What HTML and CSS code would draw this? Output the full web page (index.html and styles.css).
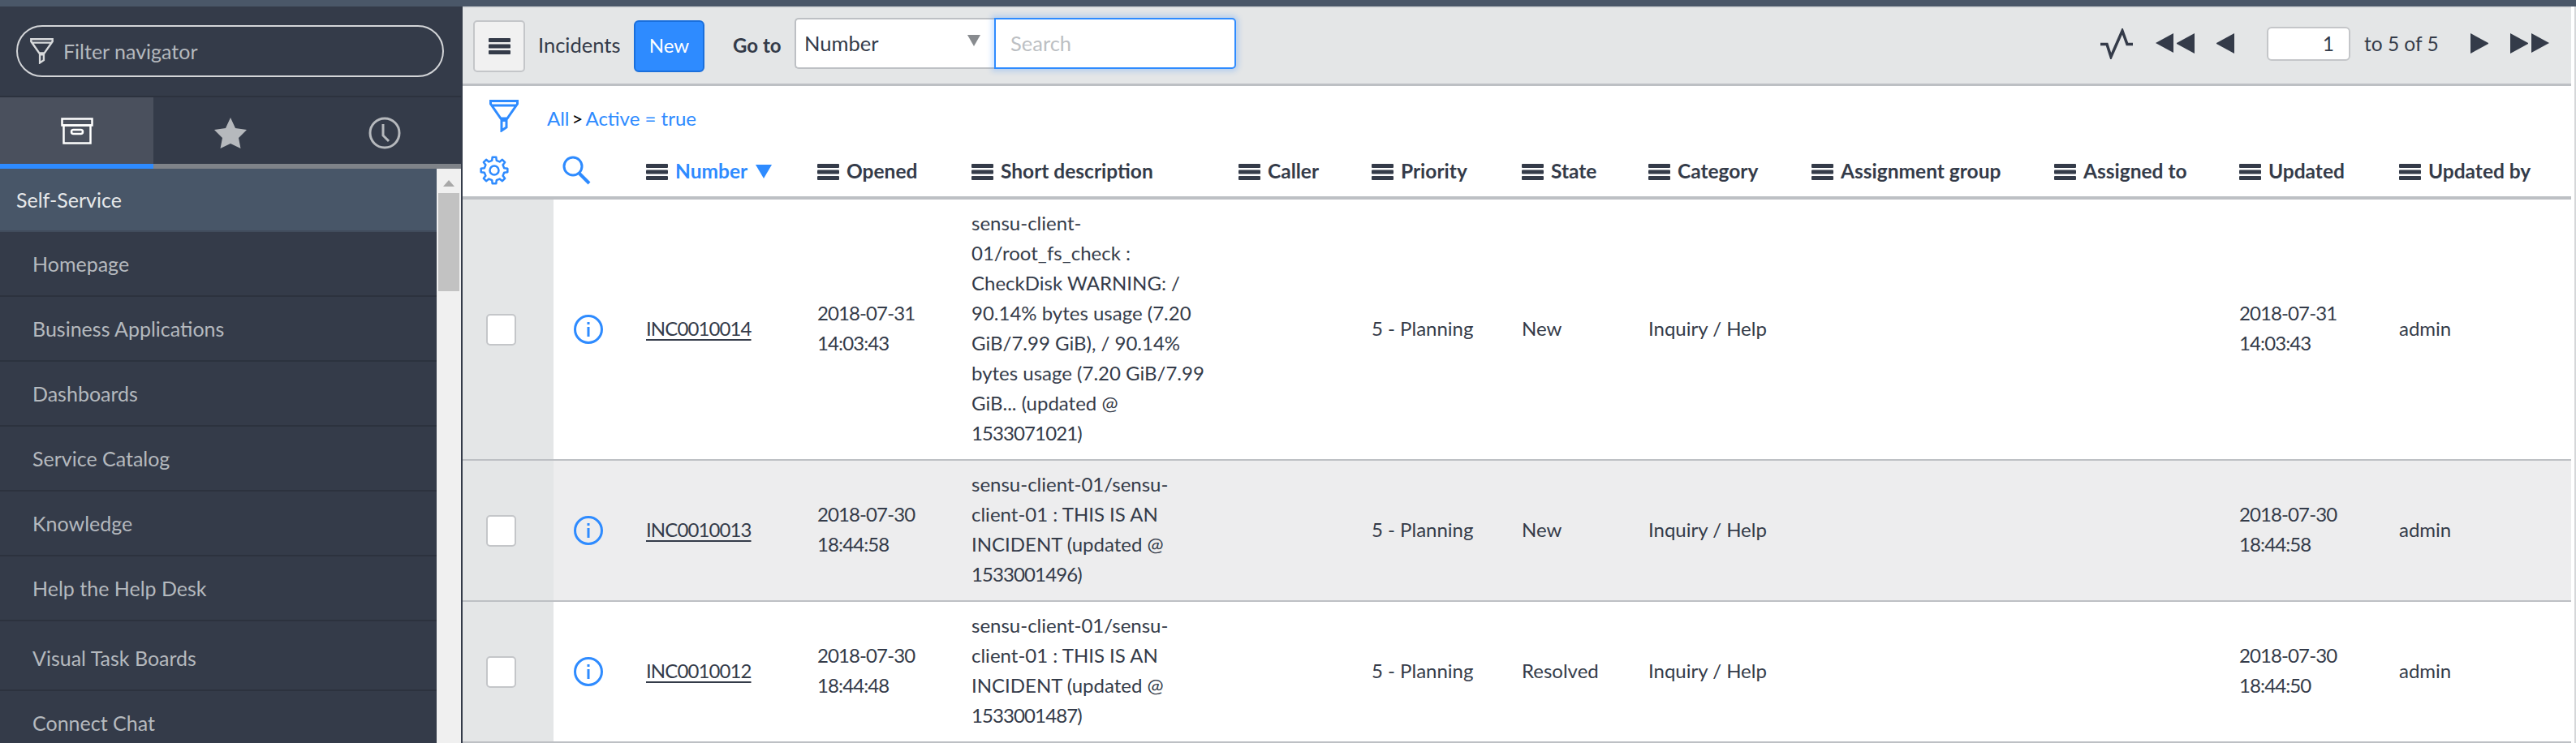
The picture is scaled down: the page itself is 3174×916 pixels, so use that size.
FILE: index.html
```html
<!DOCTYPE html>
<html lang="en">
<head>
    <meta charset="UTF-8">
    <title>Incidents</title>
    <link rel="stylesheet" href="styles.css">
</head>
<body>

<svg class="defs" width="0" height="0">
    <symbol id="bars" viewBox="0 0 27 20">
        <rect width="27" height="5" rx="1"/>
        <rect y="7.5" width="27" height="5" rx="1"/>
        <rect y="15" width="27" height="5" rx="1"/>
    </symbol>
    <symbol id="funnel" viewBox="0 0 36 40">
        <path d="M1.500 1.500H34.500V5L22 23H14L1.500 5zM2 7H34M15 25.500V38L21 34V25.500z" fill="none" stroke="currentColor" stroke-width="3"/>
    </symbol>
    <symbol id="info" viewBox="0 0 36 36">
        <circle cx="18" cy="18" r="16.500" fill="none" stroke="#2e8bff" stroke-width="3"/>
        <rect x="16.500" y="15" width="3" height="12" fill="#2e8bff"/>
        <rect x="16.500" y="9" width="3" height="3" fill="#2e8bff"/>
    </symbol>
</svg>

<div class="topbar"></div>

<div class="layout">
    <aside class="sidebar">
        <div class="nav-filter">
            <div class="nav-filter-box">
                <svg class="nav-funnel"><use href="#funnel"/></svg>
                <span>Filter navigator</span>
            </div>
        </div>
        <div class="tabs">
            <div class="tab active">
                <svg width="40" height="33" viewBox="0 0 40 33" fill="none" stroke="#fff" stroke-width="2.500">
                    <rect x="1.500" y="1.500" width="37" height="8"/>
                    <rect x="3.500" y="9.500" width="33" height="22"/>
                    <rect x="13" y="15" width="14" height="5" rx="2.500"/>
                </svg>
            </div>
            <div class="tab">
                <svg width="40" height="38" viewBox="0 0 40 38"><path d="M20 0l6 13 14 2-10 10 2.500 13L20 32 7.500 38 10 25 0 15l14-2z" fill="#b6b9bd"/></svg>
            </div>
            <div class="tab">
                <svg width="40" height="40" viewBox="0 0 40 40" fill="none" stroke="#b6b9bd" stroke-width="3">
                    <ellipse cx="20" cy="20" rx="18" ry="18"/>
                    <path d="M18 9v14l7 7"/>
                </svg>
            </div>
        </div>
        <div class="nav-body">
            <ul class="nav-list">
                <li class="nav-head">Self-Service</li>
                <li>Homepage</li>
                <li>Business Applications</li>
                <li>Dashboards</li>
                <li>Service Catalog</li>
                <li>Knowledge</li>
                <li>Help the Help Desk</li>
                <li class="tall">Visual Task Boards</li>
                <li>Connect Chat</li>
            </ul>
            <div class="scrollbar">
                <div class="scroll-arrow"></div>
                <div class="scroll-thumb"></div>
            </div>
        </div>
    </aside>

    <main class="content">
        <div class="toolbar">
            <button class="menu-btn"><svg class="bars"><use href="#bars"/></svg></button>
            <span class="list-title">Incidents</span>
            <button class="new-btn">New</button>
            <span class="goto">Go to</span>
            <div class="goto-select">Number<span class="caret"></span></div>
            <input class="goto-search" type="text" placeholder="Search">
            <div class="pager">
                <svg class="pulse" width="42" height="38" viewBox="0 0 42 38" fill="none" stroke="#343b49" stroke-width="3.500">
                    <path d="M1 19.500H9L14 35 28 3 34 19.500H41"/>
                </svg>
                <span class="tri left double first"></span>
                <span class="tri left"></span>
                <input class="page-input" type="text" value="1">
                <span class="page-count">to 5 of 5</span>
                <span class="tri right"></span>
                <span class="tri right double"></span>
            </div>
        </div>

        <div class="breadcrumb">
            <svg class="crumb-funnel"><use href="#funnel"/></svg>
            <span class="crumbs"><a>All</a><b>&gt;</b><a>Active = true</a></span>
        </div>

        <table class="incidents">
            <colgroup>
                <col class="c-check"><col class="c-info"><col class="c-number"><col class="c-opened">
                <col class="c-desc"><col class="c-caller"><col class="c-priority"><col class="c-state">
                <col class="c-category"><col class="c-group"><col class="c-assigned"><col class="c-updated"><col class="c-by">
            </colgroup>
            <thead>
                <tr>
                    <th class="cell-gear">
                        <svg width="36" height="36" viewBox="0 0 36 36" fill="none" stroke="#2e8bff" stroke-width="2.500" stroke-linejoin="round">
                            <circle cx="18" cy="18" r="5.500"/>
                            <polygon points="30.18,15.19 34.34,15.7 34.34,20.3 30.18,20.81 28.6,24.62 31.18,27.93 27.93,31.18 24.62,28.6 20.81,30.18 20.3,34.34 15.7,34.34 15.19,30.18 11.38,28.6 8.07,31.18 4.82,27.93 7.4,24.62 5.82,20.81 1.66,20.3 1.66,15.7 5.82,15.19 7.4,11.38 4.82,8.07 8.07,4.82 11.38,7.4 15.19,5.82 15.7,1.66 20.3,1.66 20.81,5.82 24.62,7.4 27.93,4.82 31.18,8.07 28.6,11.38"/>
                        </svg>
                    </th>
                    <th class="cell-info">
                        <svg width="36" height="36" viewBox="0 0 36 36" fill="none" stroke="#2e8bff" stroke-width="3">
                            <circle cx="13" cy="13" r="11"/>
                            <path d="M21 22L33 34" stroke-width="4"/>
                        </svg>
                    </th>
                    <th class="sorted"><svg class="bars"><use href="#bars"/></svg>Number <span class="sort-arrow"></span></th>
                    <th><svg class="bars"><use href="#bars"/></svg>Opened</th>
                    <th><svg class="bars"><use href="#bars"/></svg>Short description</th>
                    <th><svg class="bars"><use href="#bars"/></svg>Caller</th>
                    <th><svg class="bars"><use href="#bars"/></svg>Priority</th>
                    <th><svg class="bars"><use href="#bars"/></svg>State</th>
                    <th><svg class="bars"><use href="#bars"/></svg>Category</th>
                    <th><svg class="bars"><use href="#bars"/></svg>Assignment group</th>
                    <th><svg class="bars"><use href="#bars"/></svg>Assigned to</th>
                    <th><svg class="bars"><use href="#bars"/></svg>Updated</th>
                    <th><svg class="bars"><use href="#bars"/></svg>Updated by</th>
                </tr>
            </thead>
            <tbody>
                <tr>
                    <td class="cell-check"><span class="checkbox"></span></td>
                    <td class="cell-info"><svg class="info"><use href="#info"/></svg></td>
                    <td class="num"><a class="inc">INC0010014</a></td>
                    <td class="num">2018-07-31<br>14:03:43</td>
                    <td>sensu-client-<br>01/root_fs_check :<br>CheckDisk WARNING: /<br>90.14% bytes usage (7.20<br>GiB/7.99 GiB), / 90.14%<br>bytes usage (7.20 GiB/7.99<br>GiB... (updated @<br><span class="num">1533071021)</span></td>
                    <td></td>
                    <td>5 - Planning</td>
                    <td>New</td>
                    <td>Inquiry / Help</td>
                    <td></td>
                    <td></td>
                    <td class="num">2018-07-31<br>14:03:43</td>
                    <td>admin</td>
                </tr>
                <tr class="odd">
                    <td class="cell-check"><span class="checkbox"></span></td>
                    <td class="cell-info"><svg class="info"><use href="#info"/></svg></td>
                    <td class="num"><a class="inc">INC0010013</a></td>
                    <td class="num">2018-07-30<br>18:44:58</td>
                    <td>sensu-client-01/sensu-<br>client-01 : THIS IS AN<br>INCIDENT (updated @<br><span class="num">1533001496)</span></td>
                    <td></td>
                    <td>5 - Planning</td>
                    <td>New</td>
                    <td>Inquiry / Help</td>
                    <td></td>
                    <td></td>
                    <td class="num">2018-07-30<br>18:44:58</td>
                    <td>admin</td>
                </tr>
                <tr>
                    <td class="cell-check"><span class="checkbox"></span></td>
                    <td class="cell-info"><svg class="info"><use href="#info"/></svg></td>
                    <td class="num"><a class="inc">INC0010012</a></td>
                    <td class="num">2018-07-30<br>18:44:48</td>
                    <td>sensu-client-01/sensu-<br>client-01 : THIS IS AN<br>INCIDENT (updated @<br><span class="num">1533001487)</span></td>
                    <td></td>
                    <td>5 - Planning</td>
                    <td>Resolved</td>
                    <td>Inquiry / Help</td>
                    <td></td>
                    <td></td>
                    <td class="num">2018-07-30<br>18:44:50</td>
                    <td>admin</td>
                </tr>
            </tbody>
        </table>
    </main>
</div>

</body>
</html>
```

FILE: styles.css
```css
* {
    box-sizing: border-box;
}
body {
    font-family: 'Lato', 'Liberation Sans', sans-serif;
    font-size: 24px;
    margin: 0;
    height: 916px;
    overflow: hidden;
    background: #fff;
    color: #343b49;
}
.defs {
    position: absolute;
}
.topbar {
    height: 8px;
    background: #4a5768;
}
.layout {
    display: flex;
    height: 908px;
}

/* left navigator */
.sidebar {
    width: 570px;
    flex: none;
    background: #343b49;
    overflow: hidden;
    font-size: 25px;
}
.nav-filter {
    height: 112px;
    padding: 23px 21px 0 20px;
    border-bottom: 2px solid #2c323e;
    width: 568px;
}
.nav-filter-box {
    height: 64px;
    border: 2px solid #d3d5d8;
    border-radius: 32px;
    display: flex;
    align-items: center;
    padding-left: 15px;
    gap: 12px;
    color: #b5b9be;
}
.nav-funnel {
    width: 29px;
    height: 32px;
    color: #d8dadc;
}
.tabs {
    display: grid;
    grid-template-columns: 189px 190px 189px;
    width: 568px;
    height: 88px;
    border-bottom: 6px solid #7f8389;
}
.tab {
    display: flex;
    align-items: center;
    justify-content: center;
    height: 88px;
}
.tab.active {
    background: #4a505d;
    border-bottom: 6px solid #2e8bff;
}
.nav-body {
    display: flex;
    width: 568px;
    height: 708px;
}
.nav-list {
    list-style: none;
    margin: 0;
    padding: 0;
    width: 538px;
    flex: none;
}
.nav-list li {
    height: 80px;
    line-height: 79px;
    padding-left: 40px;
    color: #b5b9be;
    border-bottom: 2px solid #2c323e;
}
.nav-list li.tall {
    height: 86px;
    line-height: 90px;
}
.nav-list li.nav-head {
    height: 78px;
    line-height: 76px;
    padding-left: 20px;
    color: #e6e8ea;
    background: #485668;
    border-bottom: 2px solid #414c5c;
}
.scrollbar {
    width: 30px;
    background: #f0f0f0;
    padding: 0 2px;
}
.scroll-arrow {
    width: 0;
    height: 0;
    margin: 14px auto 8px;
    border-left: 7px solid transparent;
    border-right: 7px solid transparent;
    border-bottom: 8px solid #a8a8a8;
}
.scroll-thumb {
    height: 121px;
    background: #c2c2c2;
}

/* list header */
.content {
    flex: 1;
    min-width: 0;
    padding-right: 4px;
    border-right: 2px solid #d5d7d9;
}
.toolbar {
    height: 98px;
    display: flex;
    align-items: center;
    background: #e4e6e7;
    border-top: 2px solid #d9dbdd;
    border-bottom: 3px solid #bdc0c4;
    padding: 0 27px 0 13px;
    font-size: 25.5px;
}
.menu-btn {
    width: 64px;
    height: 64px;
    background: #f1f1f1;
    border: 2px solid #c4c6c9;
    border-radius: 5px;
    display: flex;
    align-items: center;
    justify-content: center;
    padding: 0;
}
.bars {
    width: 27px;
    height: 20px;
    fill: currentColor;
    color: #343b49;
    flex: none;
}
.list-title {
    width: 100px;
    margin-left: 16px;
    padding-bottom: 3px;
    white-space: nowrap;
}
.new-btn {
    margin-left: 18px;
    width: 87px;
    height: 64px;
    padding: 0 0 3px;
    background: #2e8bff;
    border: 2px solid #1a6fdc;
    border-radius: 6px;
    color: #fff;
    font: inherit;
    font-size: 24px;
}
.goto {
    margin-left: 35px;
    width: 57px;
    padding-bottom: 3px;
    font-size: 24px;
    font-weight: 700;
    white-space: nowrap;
}
.goto-select {
    margin-left: 19px;
    width: 246px;
    height: 63px;
    margin-top: -6px;
    display: flex;
    align-items: center;
    justify-content: space-between;
    padding: 0 17px 2px 10px;
    background: #fff;
    border: 2px solid #bdc0c4;
    border-right: 0;
    border-radius: 5px 0 0 5px;
}
.caret {
    border-left: 8px solid transparent;
    border-right: 8px solid transparent;
    border-top: 14px solid #888b8f;
    margin-bottom: 6px;
}
.goto-search {
    width: 298px;
    height: 63px;
    margin-top: -6px;
    padding: 0 0 2px 18px;
    font: inherit;
    background: #fff;
    border: 2px solid #2e8bff;
    border-radius: 0 5px 5px 0;
    box-shadow: 0 0 6px 3px rgba(46, 139, 255, 0.25);
    outline: none;
}
.goto-search::placeholder {
    color: #bcbfc3;
}
.pager {
    margin-left: auto;
    display: flex;
    align-items: center;
    margin-top: -6px;
    font-size: 24.5px;
}
.tri {
    display: flex;
    width: 22px;
    height: 25px;
    position: relative;
}
.tri.left {
    border-right: 22px solid #343b49;
    border-top: 12.5px solid transparent;
    border-bottom: 12.5px solid transparent;
}
.tri.right {
    border-left: 22px solid #343b49;
    border-top: 12.5px solid transparent;
    border-bottom: 12.5px solid transparent;
}
.tri.double::after {
    content: "";
    position: absolute;
    top: -12.5px;
    border-top: 12.5px solid transparent;
    border-bottom: 12.5px solid transparent;
}
.tri.left.double::after {
    left: -26px;
    border-right: 22px solid #343b49;
}
.tri.right.double::after {
    left: 4px;
    border-left: 22px solid #343b49;
}
.pulse {
    margin-right: 53px;
}
.tri.left.first {
    margin-right: 27px;
}
.page-input {
    margin-left: 40px;
    width: 103px;
    height: 42px;
    padding: 0 18px 0 0;
    text-align: right;
    font: inherit;
    color: #343b49;
    background: #fff;
    border: 2px solid #c4c6c9;
    border-radius: 6px;
}
.page-count {
    margin-left: 17px;
    margin-right: 41px;
    width: 90px;
    white-space: nowrap;
}
.tri.right.double {
    margin-left: 27px;
    margin-right: 26px;
}

.breadcrumb {
    height: 74px;
    display: flex;
    align-items: center;
    padding-left: 33px;
}
.crumb-funnel {
    width: 36px;
    height: 40px;
    color: #2e8bff;
}
.crumbs {
    margin-left: 35px;
    margin-top: 5px;
    color: #2e8bff;
}
.crumbs b {
    font-weight: 400;
    color: #000;
    margin: 0 3px;
}

/* incident table */
.incidents {
    width: 2598px;
    table-layout: fixed;
    border-collapse: separate;
    border-spacing: 0;
}
.c-check { width: 112px; }
.c-info { width: 98px; }
.c-number { width: 211px; }
.c-opened { width: 190px; }
.c-desc { width: 329px; }
.c-caller { width: 164px; }
.c-priority { width: 185px; }
.c-state { width: 156px; }
.c-category { width: 201px; }
.c-group { width: 299px; }
.c-assigned { width: 228px; }
.c-updated { width: 197px; }
.c-by { width: 228px; }

.incidents th {
    height: 66px;
    padding: 0 0 2px 16px;
    text-align: left;
    font-size: 24.5px;
    font-weight: 700;
    white-space: nowrap;
    border-bottom: 4px solid #bdc0c4;
    vertical-align: middle;
}
.incidents th .bars {
    margin-right: 9px;
    vertical-align: -2px;
}
.incidents th.sorted {
    color: #2e8bff;
}
.sort-arrow {
    display: inline-block;
    margin-left: 4px;
    border-left: 10px solid transparent;
    border-right: 10px solid transparent;
    border-top: 17px solid #2e8bff;
}
.incidents th.cell-gear {
    padding: 2px 0 0 21px;
}
.incidents th.cell-info {
    padding: 2px 0 0 11px;
}
.incidents th svg {
    display: inline-block;
}
.incidents td {
    padding: 10px 16px 14px;
    line-height: 37px;
    border-bottom: 2px solid #bdc0c4;
    vertical-align: middle;
    white-space: nowrap;
}
.num {
    letter-spacing: -0.9px;
}
.incidents tr.odd td {
    background: #ededee;
}
.incidents td.cell-check,
.incidents tr.odd td.cell-check {
    background: #e4e6e7;
    padding: 0 0 0 29px;
}
.incidents td.cell-info {
    padding: 0 0 0 25px;
}
.checkbox {
    display: block;
    width: 37px;
    height: 39px;
    background: #fff;
    border: 2px solid #c4c6c9;
    border-radius: 5px;
}
.info {
    display: block;
    width: 36px;
    height: 36px;
}
.inc {
    text-decoration: underline;
    text-underline-offset: 4px;
}
```
